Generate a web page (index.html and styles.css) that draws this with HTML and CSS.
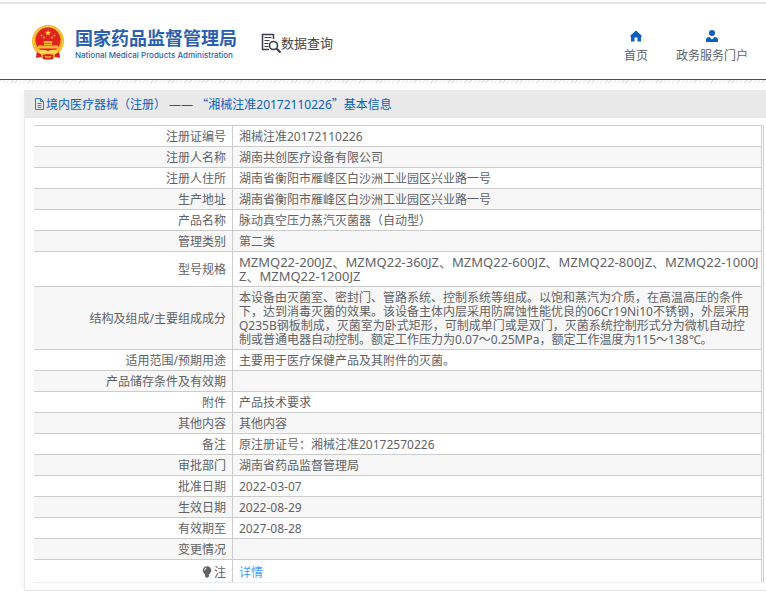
FILE: index.html
```html
<!DOCTYPE html>
<html lang="zh-CN">
<head>
    <meta charset="UTF-8">
    <meta name="viewport" content="width=device-width, initial-scale=1.0">
    <title>国家药品监督管理局 - 数据查询</title>
    <link rel="stylesheet" href="styles.css">
</head>
<body>
    <header class="header">
        <a class="logo" href="#">
            <svg class="emblem" viewBox="0 0 32 35" aria-hidden="true">
                <path d="M5 25 L4 33 L9 32 L12 34.500 H20 L23 32 L28 33 L27 25Z" fill="#d81e1c"/>
                <circle cx="16" cy="16" r="16" fill="#f3b526"/>
                <circle cx="16" cy="16" r="14.500" fill="none" stroke="#fbd75a" stroke-width="1" stroke-dasharray="2 1"/>
                <circle cx="16" cy="15" r="12.500" fill="#e0211d"/>
                <path d="M16 4.500l.9 2.200 2.400.1-1.900 1.500.7 2.300-2.100-1.300-2.100 1.300.7-2.300-1.900-1.500 2.400-.1z" fill="#fbd03c"/>
                <g fill="#f7b733">
                    <circle cx="9.500" cy="10.500" r="1"/>
                    <circle cx="12" cy="12.500" r="1"/>
                    <circle cx="20" cy="12.500" r="1"/>
                    <circle cx="22.500" cy="10.500" r="1"/>
                    <path d="M11 18l1.500-2h7l1.500 2zM12 18.500h8v1.500h-8zM6 20.500h20v3H6z"/>
                </g>
                <path d="M8 25q4-1 8 1 4-2 8-1l2 3-4 1-3-1-3 2-3-2-3 1-4-1z" fill="#fbd75a"/>
                <path d="M5 27l5 3 6-1 6 1 5-3-1 5-5-1-5 2-5-2-5 1z" fill="#d81e1c"/>
                <path d="M10 29v4M22 29v4M13 32h6" stroke="#f3b526" stroke-width="1.500"/>
            </svg>
            <span class="logo-text">
                <span class="logo-cn">国家药品监督管理局</span>
                <span class="logo-en">National Medical Products Administration</span>
            </span>
        </a>
        <a class="search-title" href="#">
            <svg class="search-icon" viewBox="0 0 20 20" fill="none" stroke="#3c3c4c" aria-hidden="true">
                <path d="M12.500 6V1.500H1.500v15H8" stroke-width="1.500"/>
                <path d="M3.500 4.500h7M3.500 7.500h5M3.500 10.500h4M3.500 13.500h4" stroke-width="1"/>
                <circle cx="12.500" cy="12.500" r="4" stroke-width="1.600"/>
                <path d="M15.500 15.500l4 4" stroke-width="2.200"/>
            </svg>
            数据查询
        </a>
        <nav class="nav">
            <a href="#">
                <svg class="nav-icon" viewBox="0 0 12 12" aria-hidden="true">
                    <path d="M6 .5L.2 5.700V6.500H1V11.500H4.500V7.500H7.500V11.500H11V6.500h.8V5.700z" fill="#0a5fc0"/>
                </svg>
                首页
            </a>
            <a href="#">
                <svg class="nav-icon" viewBox="0 0 12 12" aria-hidden="true">
                    <circle cx="6" cy="3" r="3" fill="#0a5fc0"/>
                    <path d="M0 12V10Q0 7 3.500 7L6 9.500 8.500 7Q12 7 12 10v2z" fill="#0a5fc0"/>
                </svg>
                政务服务门户
            </a>
        </nav>
    </header>

    <main class="panel">
        <h1 class="panel-title">
            <svg class="doc-icon" viewBox="0 0 12 12" fill="none" stroke="#0a5fc0" aria-hidden="true">
                <path d="M1.500 .5h5l3 3v8h-8zM6.500 .5v3h3M3.500 5.500h4M3.500 7.500h4M3.500 9.500h4" stroke-width=".8"/>
            </svg>
            <span>境内医疗器械（注册） —— <span class="quote">“</span>湘械注准20172110226<span class="quote">”</span>基本信息</span>
        </h1>
        <div class="table-box">
            <table class="info">
                <tbody>
                    <tr><th scope="row">注册证编号</th><td>湘械注准20172110226</td></tr>
                    <tr><th scope="row">注册人名称</th><td>湖南共创医疗设备有限公司</td></tr>
                    <tr><th scope="row">注册人住所</th><td>湖南省衡阳市雁峰区白沙洲工业园区兴业路一号</td></tr>
                    <tr><th scope="row">生产地址</th><td>湖南省衡阳市雁峰区白沙洲工业园区兴业路一号</td></tr>
                    <tr><th scope="row">产品名称</th><td>脉动真空压力蒸汽灭菌器（自动型）</td></tr>
                    <tr><th scope="row">管理类别</th><td>第二类</td></tr>
                    <tr><th scope="row">型号规格</th><td class="models">MZMQ22-200JZ、MZMQ22-360JZ、MZMQ22-600JZ、MZMQ22-800JZ、MZMQ22-1000JZ、MZMQ22-1200JZ</td></tr>
                    <tr><th scope="row">结构及组成/主要组成成分</th><td>本设备由灭菌室、密封门、管路系统、控制系统等组成。以饱和蒸汽为介质，在高温高压的条件下，达到消毒灭菌的效果。该设备主体内层采用防腐蚀性能优良的06Cr19Ni10不锈钢，外层采用Q235B钢板制成，灭菌室为卧式矩形，可制成单门或是双门，灭菌系统控制形式分为微机自动控制或普通电器自动控制。额定工作压力为0.07～0.25MPa，额定工作温度为115～138℃。</td></tr>
                    <tr><th scope="row">适用范围/预期用途</th><td>主要用于医疗保健产品及其附件的灭菌。</td></tr>
                    <tr><th scope="row">产品储存条件及有效期</th><td></td></tr>
                    <tr><th scope="row">附件</th><td>产品技术要求</td></tr>
                    <tr><th scope="row">其他内容</th><td>其他内容</td></tr>
                    <tr><th scope="row">备注</th><td>原注册证号：湘械注准20172570226</td></tr>
                    <tr><th scope="row">审批部门</th><td>湖南省药品监督管理局</td></tr>
                    <tr><th scope="row">批准日期</th><td>2022-03-07</td></tr>
                    <tr><th scope="row">生效日期</th><td>2022-08-29</td></tr>
                    <tr><th scope="row">有效期至</th><td>2027-08-28</td></tr>
                    <tr><th scope="row">变更情况</th><td></td></tr>
                    <tr class="note">
                        <th scope="row"><svg class="bulb" viewBox="0 0 10 12" aria-hidden="true"><circle cx="5" cy="4.500" r="4.200" fill="#606266"/><path d="M3 8h4v2.500L5 12 3 10.500z" fill="#606266"/><path d="M2.500 4.500Q2.500 2.500 4.500 2" fill="none" stroke="#fff"/></svg>注</th>
                        <td><a href="#">详情</a></td>
                    </tr>
                </tbody>
            </table>
        </div>
    </main>
</body>
</html>
```
FILE: styles.css
```css
* {
    margin: 0;
    padding: 0;
    box-sizing: border-box;
}

body {
    font-family: 'Noto Sans', 'Noto Sans CJK SC', sans-serif;
    font-size: 12px;
    line-height: 14px;
    color: #606266;
    background: #fff;
    padding-top: 2px;
}

a {
    color: inherit;
    text-decoration: none;
}

.header {
    display: flex;
    align-items: flex-start;
    height: 78px;
    padding: 0 18px 0 32px;
    border-top: 2px solid #e4e4e7;
    border-bottom: 1px solid #0a5fb4;
}

/* hatched strip under the header line */
.header + .panel::before {
    content: '';
    position: absolute;
    top: -10px;
    left: -25px;
    right: 0;
    height: 3px;
    background: repeating-linear-gradient(135deg, #e2e2e2 0, #e2e2e2 1px, #fff 1px, #fff 3px);
}

.logo {
    display: flex;
    gap: 11px;
    padding-top: 21px;
    color: #2c5fb0;
}

.emblem {
    width: 32px;
    height: 35px;
}

.logo-text {
    display: flex;
    flex-direction: column;
    padding-top: 1px;
}

.logo-cn {
    font-size: 18px;
    line-height: 24px;
    font-weight: bold;
}

.logo-en {
    font-family: Inter, sans-serif;
    font-size: 8px;
    line-height: 11px;
    font-weight: 500;
    white-space: nowrap;
}

.search-title {
    display: flex;
    align-items: center;
    margin-left: 24px;
    padding-top: 29px;
    font-size: 13px;
    line-height: 18px;
    color: #444;
}

.search-icon {
    width: 20px;
    height: 20px;
}

.nav {
    display: flex;
    gap: 28px;
    margin-left: auto;
    padding-top: 26px;
}

.nav a {
    display: flex;
    flex-direction: column;
    align-items: center;
    gap: 7px;
}

.nav-icon {
    width: 12px;
    height: 12px;
}

.panel {
    position: relative;
    margin: 10px 0 0 24px;
    padding-bottom: 7px;
    border-left: 1px solid #ebebed;
    border-bottom: 1px solid #e4e4e6;
    box-shadow: 0 2px 8px rgba(0, 0, 0, 0.05);
}

.panel-title {
    display: flex;
    align-items: center;
    height: 28px;
    padding-left: 9px;
    background: #e9e9e9;
    color: #0a5fc0;
    font-size: 12px;
    font-weight: normal;
}

.doc-icon {
    width: 12px;
    height: 12px;
}

.quote {
    font-family: 'Noto Sans CJK SC', sans-serif;
}

.table-box {
    margin: 7px 2px 0 9px;
    padding-right: 1px;
    border-right: 1px solid #ccc;
}

.info {
    width: 100%;
    table-layout: fixed;
    border-collapse: separate;
    border-spacing: 0;
    border-bottom: 1px solid #ebeef5;
}

.info th,
.info td {
    height: 21px;
    padding: 4px 6px 2px;
    border-top: 1px solid #ccc;
    border-right: 1px solid #ccc;
    font-weight: normal;
    vertical-align: middle;
    word-break: break-all;
}

.info th {
    width: 199px;
    text-align: right;
}

.info .models {
    padding: 3px 1px 3px 6px;
    font-size: 13px;
}

.info tr:nth-child(even) {
    background: #f7f7f7;
}

.info .note th,
.info .note td {
    height: 23px;
    padding-top: 5px;
}

.info a {
    color: #409eff;
}

.bulb {
    width: 10px;
    height: 12px;
    margin-right: 2px;
    vertical-align: -1px;
}
```
